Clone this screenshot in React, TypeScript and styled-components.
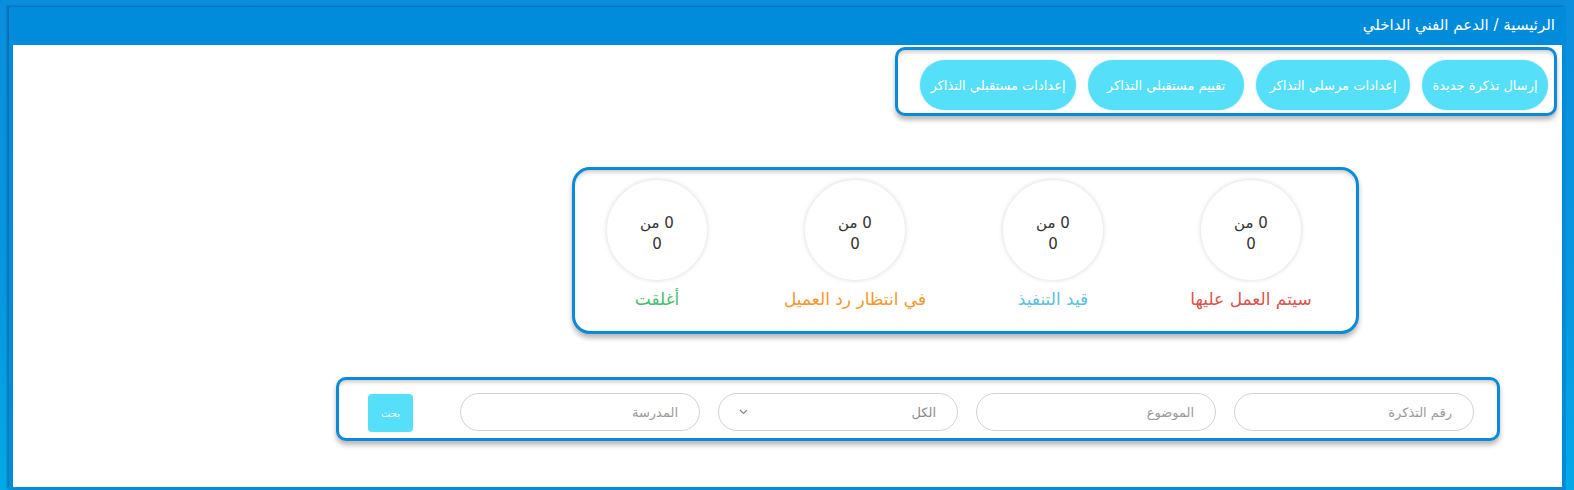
import styled, { createGlobalStyle } from "styled-components";

const GlobalStyle = createGlobalStyle`
  html, body {
    margin: 0;
    padding: 0;
  }
  body {
    background: linear-gradient(180deg, #0a8edd 0%, #0897e0 60%, #05a9e6 100%);
    font-family: "DejaVu Sans", "Noto Sans", sans-serif;
    overflow: hidden;
  }
  * {
    box-sizing: border-box;
  }
`;

type Stat = { label: string; color: string };

const stats: Stat[] = [
  { label: "سيتم العمل عليها", color: "#d9534f" },
  { label: "قيد التنفيذ", color: "#5bc0de" },
  { label: "في انتظار رد العميل", color: "#f7962c" },
  { label: "أغلقت", color: "#4cbc73" },
];

const actions = [
  { text: "إرسال تذكرة جديدة", w: 126 },
  { text: "إعدادات مرسلي التذاكر", w: 154 },
  { text: "تقييم مستقبلي التذاكر", w: 156 },
  { text: "إعدادات مستقبلي التذاكر", w: 156 },
];

const App = () => {
  return (
    <>
      <GlobalStyle />
      <Page>
        <Panel>
          <Header>الرئيسية / الدعم الفني الداخلي</Header>
          <Content>
            <ActionsCard>
              {actions.map((a) => (
                <ActionButton key={a.text} w={a.w}>
                  {a.text}
                </ActionButton>
              ))}
            </ActionsCard>

            <StatsCard>
              {stats.map((s) => (
                <StatItem key={s.label}>
                  <Circle>
                    0 من
                    <br />0
                  </Circle>
                  <StatLabel color={s.color}>{s.label}</StatLabel>
                </StatItem>
              ))}
            </StatsCard>

            <SearchCard>
              <Field placeholder="رقم التذكرة" />
              <Field placeholder="الموضوع" />
              <SelectBox>
                <span>الكل</span>
                <svg width="9" height="6" viewBox="0 0 9 6">
                  <path d="M1 1l3.5 3.5L8 1" fill="none" stroke="#888" strokeWidth="1.1" />
                </svg>
              </SelectBox>
              <Field placeholder="المدرسة" />
              <SearchButton>بحث</SearchButton>
            </SearchCard>
          </Content>
        </Panel>
      </Page>
    </>
  );
};

const Page = styled.div`
  width: 1574px;
  height: 490px;
  padding: 7px 8px 0 9px;
`;

const Panel = styled.div`
  direction: rtl;
  height: 483px;
  background: #008bdb;
  box-shadow: -2px -1px 2px rgba(0, 40, 90, 0.35);
  display: flex;
  flex-direction: column;
`;

const Header = styled.div`
  height: 38px;
  flex: none;
  display: flex;
  align-items: center;
  padding: 0 11px 2px;
  color: #ffffff;
  font-size: 15px;
`;

const Content = styled.div`
  flex: 1;
  margin: 0 4px 3px 4px;
  background: #ffffff;
  display: flex;
  flex-direction: column;
  align-items: flex-start;
`;

const Card = styled.div`
  border: 3px solid #0a8ad8;
  background: #ffffff;
  box-shadow: 0 4px 5px rgba(0, 0, 0, 0.28), inset 0 4px 4px -2px rgba(0, 0, 0, 0.22);
  display: flex;
`;

const ActionsCard = styled(Card)`
  margin: 2px 0 0 0;
  margin-inline-start: 5px;
  width: 662px;
  height: 69px;
  border-radius: 10px;
  padding: 10px 6px 3px 0;
  gap: 12px;
  align-items: flex-start;
`;

const ActionButton = styled.div<{ w: number }>`
  width: ${(p) => p.w}px;
  height: 50px;
  border-radius: 25px;
  background: #55dff9;
  color: #ffffff;
  font-size: 13px;
  display: flex;
  align-items: center;
  justify-content: center;
  white-space: nowrap;
  box-shadow: 0 0 2px rgba(120, 200, 230, 0.6);
`;

const StatsCard = styled(Card)`
  margin-top: 51px;
  margin-inline-start: 203px;
  width: 787px;
  height: 167px;
  border-radius: 18px;
  padding: 10px 55px 0 0;
  gap: 98px;
`;

const StatItem = styled.div`
  width: 100px;
  display: flex;
  flex-direction: column;
  align-items: center;
`;

const Circle = styled.div`
  width: 100px;
  height: 100px;
  border-radius: 50%;
  background: #ffffff;
  box-shadow: 0 0 5px rgba(0, 0, 0, 0.16);
  display: flex;
  align-items: center;
  justify-content: center;
  text-align: center;
  color: #333333;
  font-size: 15px;
  line-height: 21px;
  padding-top: 8px;
`;

const StatLabel = styled.div<{ color: string }>`
  margin-top: 9px;
  color: ${(p) => p.color};
  font-size: 17px;
  white-space: nowrap;
`;

const SearchCard = styled(Card)`
  margin-top: 43px;
  margin-inline-start: 62px;
  width: 1164px;
  height: 64px;
  border-radius: 10px;
  padding: 13px 23px 0 0;
  gap: 18px;
  align-items: flex-start;
`;

const Field = styled.input`
  width: 240px;
  height: 38px;
  border: 1px solid #d2d2d2;
  border-radius: 19px;
  padding: 0 21px;
  font-family: "DejaVu Sans", sans-serif;
  font-size: 13px;
  color: #555;
  outline: none;
  background: #ffffff;
  direction: rtl;
  &::placeholder {
    color: #9a9a9a;
  }
`;

const SelectBox = styled.div`
  width: 240px;
  height: 38px;
  border: 1px solid #d2d2d2;
  border-radius: 19px;
  padding: 0 21px 0 20px;
  font-size: 13px;
  color: #8a8a8a;
  display: flex;
  align-items: center;
  justify-content: space-between;
`;

const SearchButton = styled.div`
  margin-inline-start: 29px;
  margin-top: 1px;
  width: 45px;
  height: 38px;
  border-radius: 4px;
  background: #55dff9;
  color: #ffffff;
  font-size: 10px;
  display: flex;
  align-items: center;
  justify-content: center;
`;

export default App;
